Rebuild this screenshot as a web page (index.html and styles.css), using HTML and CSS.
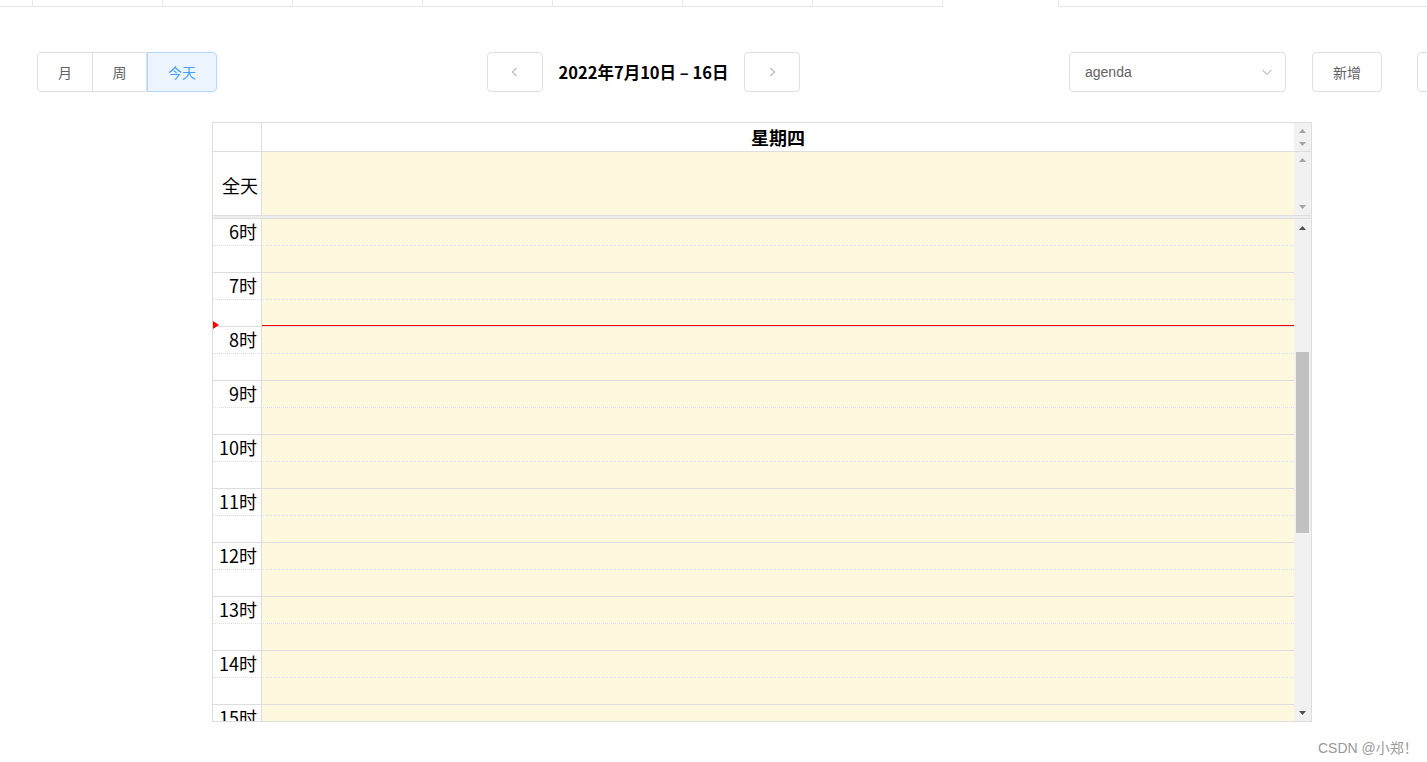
FILE: index.html
```html
<!DOCTYPE html>
<html lang="zh-CN">
<head>
<meta charset="utf-8">
<title>日程</title>
<link rel="stylesheet" href="styles.css">
</head>
<body>
<div class="page">
  <div class="tabs">
    <div class="tab-lead"></div>
    <div class="tab"></div><div class="tab"></div><div class="tab"></div><div class="tab"></div><div class="tab"></div><div class="tab"></div><div class="tab"></div>
    <div class="tab tab-active"></div>
    <div class="tab-rest"></div>
  </div>

  <div class="toolbar">
    <div class="btn-group">
      <button class="btn btn-g">月</button>
      <button class="btn btn-g">周</button>
      <button class="btn btn-g btn-active">今天</button>
    </div>
    <div class="nav">
      <button class="btn btn-icon" aria-label="上一周">
        <svg width="12" height="12" viewBox="0 0 12 12"><path d="M7.5 2 L3.5 6 L7.5 10" fill="none" stroke="#8a8c91" stroke-width="1"/></svg>
      </button>
      <h2 class="title">2022年7月10日 – 16日</h2>
      <button class="btn btn-icon" aria-label="下一周">
        <svg width="12" height="12" viewBox="0 0 12 12"><path d="M4.5 2 L8.5 6 L4.5 10" fill="none" stroke="#8a8c91" stroke-width="1"/></svg>
      </button>
    </div>
    <div class="right">
      <div class="select">
        <span>agenda</span>
        <svg width="14" height="14" viewBox="0 0 14 14"><path d="M2.5 5 L7 9.5 L11.5 5" fill="none" stroke="#c0c4cc" stroke-width="1.1"/></svg>
      </div>
      <button class="btn btn-add">新增</button>
      <button class="btn btn-cut"></button>
    </div>
  </div>

  <div class="cal">
    <div class="cal-head">
      <div class="axis axis-head"></div>
      <div class="day-head">星期四</div>
      <div class="sb sb-mini">
        <svg width="9" height="6" viewBox="0 0 9 6"><polygon points="4.5,1 8,5 1,5" fill="#a3a3a3"/></svg>
        <svg width="9" height="6" viewBox="0 0 9 6"><polygon points="1,1 8,1 4.5,5" fill="#a3a3a3"/></svg>
      </div>
    </div>
    <div class="cal-allday">
      <div class="axis axis-allday">全天</div>
      <div class="day-cell"></div>
      <div class="sb sb-allday">
        <svg width="9" height="6" viewBox="0 0 9 6"><polygon points="4.5,1 8,5 1,5" fill="#a3a3a3"/></svg>
        <svg width="9" height="6" viewBox="0 0 9 6"><polygon points="1,1 8,1 4.5,5" fill="#a3a3a3"/></svg>
      </div>
    </div>
    <div class="divider"></div>
    <div class="cal-body">
      <div class="tg">
        <div class="slot minor"><div class="axis"><span>6时</span></div><div class="day-cell"></div></div>
        <div class="slot"><div class="axis"></div><div class="day-cell"></div></div>
        <div class="slot minor"><div class="axis"><span>7时</span></div><div class="day-cell"></div></div>
        <div class="slot"><div class="axis"></div><div class="day-cell"></div></div>
        <div class="slot minor"><div class="axis"><span>8时</span></div><div class="day-cell"></div></div>
        <div class="slot"><div class="axis"></div><div class="day-cell"></div></div>
        <div class="slot minor"><div class="axis"><span>9时</span></div><div class="day-cell"></div></div>
        <div class="slot"><div class="axis"></div><div class="day-cell"></div></div>
        <div class="slot minor"><div class="axis"><span>10时</span></div><div class="day-cell"></div></div>
        <div class="slot"><div class="axis"></div><div class="day-cell"></div></div>
        <div class="slot minor"><div class="axis"><span>11时</span></div><div class="day-cell"></div></div>
        <div class="slot"><div class="axis"></div><div class="day-cell"></div></div>
        <div class="slot minor"><div class="axis"><span>12时</span></div><div class="day-cell"></div></div>
        <div class="slot"><div class="axis"></div><div class="day-cell"></div></div>
        <div class="slot minor"><div class="axis"><span>13时</span></div><div class="day-cell"></div></div>
        <div class="slot"><div class="axis"></div><div class="day-cell"></div></div>
        <div class="slot minor"><div class="axis"><span>14时</span></div><div class="day-cell"></div></div>
        <div class="slot"><div class="axis"></div><div class="day-cell"></div></div>
        <div class="slot minor"><div class="axis"><span>15时</span></div><div class="day-cell"></div></div>
        <div class="slot"><div class="axis"></div><div class="day-cell"></div></div>
        <div class="now-line"></div>
        <div class="now-arrow"></div>
      </div>
      <div class="sb sb-main">
        <div class="sb-btn">
          <svg width="9" height="6" viewBox="0 0 9 6"><polygon points="4.5,1 8,5 1,5" fill="#505050"/></svg>
        </div>
        <div class="sb-track"><div class="sb-thumb"></div></div>
        <div class="sb-btn">
          <svg width="9" height="6" viewBox="0 0 9 6"><polygon points="1,1 8,1 4.5,5" fill="#505050"/></svg>
        </div>
      </div>
    </div>
  </div>

  <div class="watermark">CSDN @小郑！</div>
</div>
</body>
</html>
```

FILE: styles.css
```css
html, body {
  margin: 0;
  padding: 0;
  background: #fff;
  overflow: hidden;
}
body {
  font-family: "Noto Sans CJK SC", "Liberation Sans", sans-serif;
  color: #000;
  width: 1427px;
  height: 762px;
}
.page {
  position: relative;
  width: 1427px;
  height: 762px;
  overflow: hidden;
}

/* tabs strip */
.tabs {
  display: flex;
  height: 7px;
}
.tab-lead {
  width: 32px;
  border-bottom: 1px solid #e4e7ed;
  height: 6px;
}
.tab {
  width: 129px;
  height: 6px;
  border-left: 1px solid #e4e7ed;
  border-bottom: 1px solid #e4e7ed;
}
.tab-active {
  width: 115px;
  height: 7px;
  border-right: 1px solid #e4e7ed;
  border-bottom: none;
}
.tab-rest {
  flex: 1;
  height: 6px;
  border-bottom: 1px solid #e4e7ed;
}

/* toolbar */
.toolbar {
  display: flex;
  align-items: center;
  margin-top: 45px;
  padding-left: 37px;
  height: 40px;
}
.btn {
  box-sizing: border-box;
  height: 40px;
  border: 1px solid #dcdfe6;
  border-radius: 4px;
  background: #fff;
  color: #606266;
  font-family: "Noto Sans CJK SC", "Liberation Sans", sans-serif;
  font-size: 14px;
  padding: 0;
  margin: 0;
  display: flex;
  align-items: center;
  justify-content: center;
}
.btn-group {
  display: flex;
}
.btn-g {
  width: 55px;
  border-radius: 0;
  margin-left: -1px;
}
.btn-g:first-child {
  margin-left: 0;
  border-radius: 4px 0 0 4px;
  width: 56px;
}
.btn-g.btn-active {
  width: 71px;
  margin-left: 0;
  width: 70px;
  border-radius: 0 4px 4px 0;
  background: #ecf5ff;
  border-color: #b3d8ff;
  color: #409eff;
  position: relative;
}
.nav {
  display: flex;
  align-items: center;
  margin-left: 270px;
}
.btn-icon {
  width: 56px;
}
.title {
  margin: 0 15px;
  font-size: 16.5px;
  font-weight: bold;
  width: 171px;
  text-align: center;
  white-space: nowrap;
  font-family: "Noto Sans CJK SC", sans-serif;
  line-height: 40px;
}
.right {
  display: flex;
  align-items: center;
  margin-left: 269px;
}
.select {
  box-sizing: border-box;
  width: 217px;
  height: 40px;
  border: 1px solid #dcdfe6;
  border-radius: 4px;
  display: flex;
  align-items: center;
  justify-content: space-between;
  padding: 0 11px 0 15px;
  color: #606266;
  font-size: 14px;
  font-family: "Liberation Sans", "Noto Sans CJK SC", sans-serif;
}
.btn-add {
  width: 70px;
  margin-left: 26px;
}
.btn-cut {
  width: 70px;
  margin-left: 35px;
  flex-shrink: 0;
}

/* calendar */
.cal {
  box-sizing: border-box;
  width: 1100px;
  height: 600px;
  margin: 30px 0 0 212px;
  border: 1px solid #ddd;
  display: flex;
  flex-direction: column;
  overflow: hidden;
  font-size: 18px;
}
.axis {
  width: 48px;
  flex-shrink: 0;
  border-right: 1px solid #ddd;
  background: #fff;
  box-sizing: content-box;
}
.day-cell {
  flex: 1;
  background: #fef8de;
}
.sb {
  width: 17px;
  flex-shrink: 0;
  background: #f1f1f1;
}
.cal-head {
  display: flex;
  height: 28px;
  border-bottom: 1px solid #ddd;
}
.day-head {
  flex: 1;
  text-align: center;
  font-weight: bold;
  line-height: 29px;
  background: #fff;
}
.sb-mini, .sb-allday {
  display: flex;
  flex-direction: column;
  align-items: center;
}
.sb-mini {
  justify-content: space-around;
  padding: 2px 0 1px;
  box-sizing: border-box;
}
.sb-allday {
  justify-content: space-between;
  padding: 5px 0 5px;
  box-sizing: border-box;
}
.cal-allday {
  display: flex;
  height: 63px;
  border-bottom: 1px solid #ddd;
}
.axis-allday {
  text-align: right;
  padding-right: 3px;
  width: 45px;
  line-height: 66px;
}
.divider {
  height: 2px;
  background: #eee;
  border-bottom: 1px solid #ddd;
}
.cal-body {
  flex: 1;
  display: flex;
  min-height: 0;
}
.tg {
  flex: 1;
  position: relative;
  overflow: hidden;
}
.slot {
  display: flex;
  height: 26px;
  border-bottom: 1px solid #ddd;
}
.slot.minor {
  border-bottom: 1px dotted #ddd;
}
.slot .axis {
  position: relative;
}
.slot .axis span {
  position: absolute;
  right: 4px;
  top: -1px;
  line-height: 27px;
  white-space: nowrap;
}
.now-line {
  position: absolute;
  left: 49px;
  right: 0;
  top: 106px;
  height: 0;
  border-top: 1px solid #f00;
}
.now-arrow {
  position: absolute;
  left: 0;
  top: 102px;
  width: 0;
  height: 0;
  border-left: 6px solid #f00;
  border-top: 4px solid transparent;
  border-bottom: 4px solid transparent;
}
.sb-main {
  display: flex;
  flex-direction: column;
}
.sb-btn {
  height: 17px;
  display: flex;
  align-items: center;
  justify-content: center;
}
.sb-track {
  flex: 1;
}
.sb-thumb {
  margin: 116px auto 0;
  width: 13px;
  height: 181px;
  background: #c1c1c1;
}

.watermark {
  position: absolute;
  left: 1318px;
  top: 737px;
  font-size: 14px;
  color: #999;
  font-family: "Liberation Sans", "Noto Sans CJK SC", sans-serif;
  white-space: nowrap;
}
```
